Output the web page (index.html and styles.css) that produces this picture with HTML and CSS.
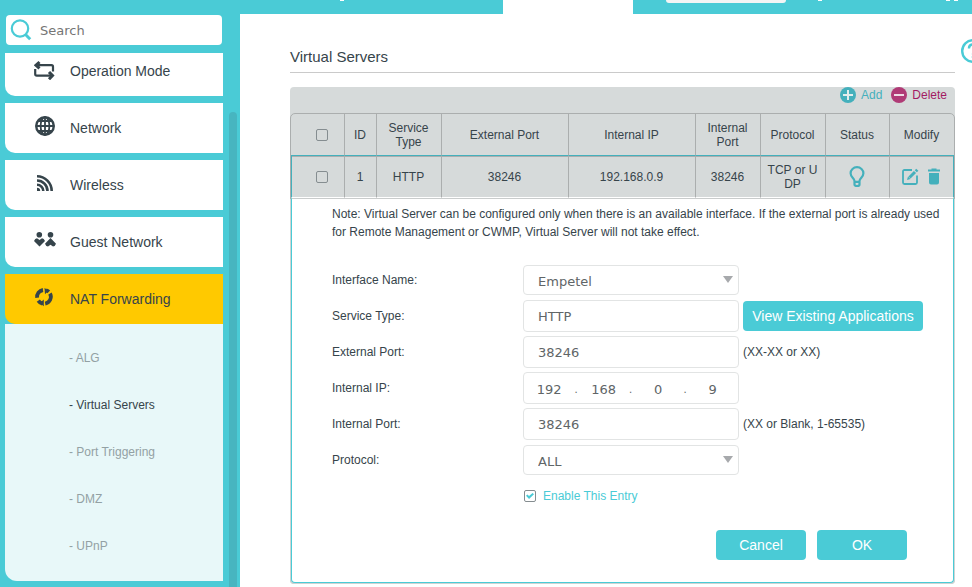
FILE: index.html
```html
<!DOCTYPE html>
<html lang="en">
<head>
<meta charset="utf-8">
<title>Virtual Servers</title>
<link rel="stylesheet" href="styles.css">
</head>
<body>
<div class="app">
  <aside class="sidebar">
    <label class="search">
      <svg width="22" height="22" viewBox="0 0 22 22" fill="none" stroke="#4acbd6" aria-hidden="true"><circle cx="10" cy="9.500" r="8.200" stroke-width="2.200"/><path d="M15.500 15.500l4.700 4.700" stroke-width="3"/></svg>
      <input type="search" placeholder="Search">
    </label>
    <div class="menu-area">
      <nav class="menu">
        <a class="item" href="#"><svg width="22" height="22" viewBox="0 -1 22 22" fill="none" stroke="#36444b" stroke-width="2.200" aria-hidden="true"><path d="M3 6.200h14.500q1.500 0 1.500 1.500v4.800"/><path d="M1.200 10v5q0 1.600 1.600 1.600H17"/><path d="M5.500 3L2 6.200l3.500 3.200M15 13l3.500 3.600L15 20.200" stroke-width="3"/></svg>Operation Mode</a>
        <a class="item" href="#"><svg width="22" height="22" viewBox="0 -1 22 22" fill="none" stroke="#36444b" stroke-width="1.800" aria-hidden="true"><circle cx="11" cy="10" r="8.800" stroke-width="2.400"/><ellipse cx="11" cy="10" rx="4.400" ry="8.800"/><path d="M11 1v18M2 10h18M3.500 5h15M3.500 15h15"/></svg>Network</a>
        <a class="item" href="#"><svg width="22" height="22" viewBox="0 -1 22 22" fill="none" stroke="#36444b" stroke-width="2.600" aria-hidden="true"><path d="M3 3.300a14.700 14.700 0 0 1 14.700 14.700M3 7.500a10.500 10.500 0 0 1 10.500 10.500M3 11.700a6.300 6.300 0 0 1 6.300 6.300"/><path d="M3 14.800a3.200 3.200 0 0 1 3.200 3.200H3z" fill="#36444b" stroke="none"/></svg>Wireless</a>
        <a class="item" href="#"><svg width="22" height="22" viewBox="0 -1 22 22" fill="#36444b" aria-hidden="true"><circle cx="5.300" cy="4.700" r="2.800"/><circle cx="16.500" cy="4.700" r="2.800"/><path d="M0 11q1-2.800 3-2.800L5.500 10 8 8.200q2 0 3 2.800l-5.500 5.500zM16.500 8l5.500 5.700q-1 2.800-3 2.800l-2.500-1.800-2.500 1.800q-2 0-3-2.800z"/></svg>Guest Network</a>
        <a class="item active" href="#"><svg width="22" height="22" viewBox="0 -1 22 22" fill="none" stroke="#36444b" stroke-width="3.800" aria-hidden="true"><path d="M3.100 10.800A7 7 0 0 1 9 3M12 3.200a7 7 0 0 1 2.800 1.700M16 6.500a7 7 0 0 1-4.800 10.200M8.500 16.600a7 7 0 0 1-4.200-3"/><path d="M10.500 1l4 2.500-3.500 3.700zM9.800 12.500v6.700L5.800 16z" fill="#36444b" stroke="none"/></svg>NAT Forwarding</a>
      </nav>
      <ul class="submenu">
        <li><a href="#">- ALG</a></li>
        <li><a class="current" href="#">- Virtual Servers</a></li>
        <li><a href="#">- Port Triggering</a></li>
        <li><a href="#">- DMZ</a></li>
        <li><a href="#">- UPnP</a></li>
      </ul>
    </div>
    <div class="thumb"></div>
  </aside>

  <main class="main">
    <div class="topbar">
      <div class="top-left"><i class="mark"></i></div>
      <div class="top-tab"></div>
      <div class="top-right"><div class="top-select"></div><i class="mark"></i><i class="mark far"></i><i class="mark"></i></div>
    </div>
    <div class="content">
      <div class="title-bar">
        <h1>Virtual Servers</h1>
        <button class="help" type="button" aria-label="Help"><svg width="24" height="24" viewBox="0 0 24 24" fill="none" stroke="#4acbd6" stroke-width="2.400" aria-hidden="true"><circle cx="12" cy="12" r="10.800"/><path d="M8 9.500a4 4 0 1 1 5.500 3.500q-1.500.7-1.500 2.500M12 17v2"/></svg></button>
      </div>

      <div class="panel">
        <div class="toolbar">
          <button class="tool add" type="button"><svg width="16" height="16" viewBox="0 0 16 16" aria-hidden="true"><circle cx="8" cy="8" r="8" fill="currentColor"/><path d="M3 8h10M8 3v10" stroke="#e3eeee" stroke-width="2"/></svg>Add</button>
          <button class="tool delete" type="button"><svg width="16" height="16" viewBox="0 0 16 16" aria-hidden="true"><circle cx="8" cy="8" r="8" fill="#b03b76"/><path d="M3 8h10" stroke="#eedde5" stroke-width="2"/></svg>Delete</button>
        </div>
        <table class="servers">
          <colgroup><col class="c-check"><col class="c-id"><col class="c-small"><col><col><col class="c-small"><col class="c-small"><col class="c-status"><col class="c-small"></colgroup>
          <thead>
            <tr><th><input class="box" type="checkbox" aria-label="Select all"></th><th>ID</th><th>Service Type</th><th>External Port</th><th>Internal IP</th><th>Internal Port</th><th>Protocol</th><th>Status</th><th>Modify</th></tr>
          </thead>
          <tbody>
            <tr class="entry">
              <td><input class="box" type="checkbox" aria-label="Select entry 1"></td><td>1</td><td>HTTP</td><td>38246</td><td>192.168.0.9</td><td>38246</td><td>TCP or U<br>DP</td>
              <td><button class="icon" type="button" aria-label="Toggle status"><svg width="16" height="22" viewBox="0 0 16 22" fill="none" stroke="#44b0bc" stroke-width="2.200" aria-hidden="true"><path d="M5.500 15c0-2.500-3.900-3.800-3.900-7.700a6.400 6.100 0 0 1 12.800 0c0 3.900-3.900 5.200-3.900 7.700v3.500q0 1.500-2.500 1.500t-2.500-1.500zM5.500 15.800h5"/></svg></button></td>
              <td><div class="icons">
                <button class="icon" type="button" aria-label="Edit"><svg width="17" height="17" viewBox="0 0 17 17" fill="none" stroke="#44b0bc" stroke-width="1.800" aria-hidden="true"><path d="M10 2H2.500Q1 2 1 3.500v11Q1 16 2.500 16h11q1.500 0 1.500-1.500V7.500"/><path d="M7.500 9.500L13 4" stroke-width="3"/><path d="M13.800 3.200l1.500-1.500" stroke-width="3"/><path d="M5 12l1-3.500L8.500 11z" fill="#44b0bc" stroke="none"/></svg></button>
                <button class="icon" type="button" aria-label="Delete"><svg width="12" height="17" viewBox="0 0 12 17" fill="#44b0bc" aria-hidden="true"><path d="M0 1.500h3.500V.5h5v1H12v2H0zM1 5h10v9.500q0 2-2 2H3q-2 0-2-2z"/></svg></button>
              </div></td>
            </tr>
            <tr>
              <td class="editor" colspan="9">
                <form>
                  <p class="note">Note: Virtual Server can be configured only when there is an available interface. If the external port is already used for Remote Management or CWMP, Virtual Server will not take effect.</p>
                  <div class="row"><label for="iface">Interface Name:</label><div class="select"><select id="iface"><option>Empetel</option></select></div></div>
                  <div class="row"><label for="service">Service Type:</label><input class="field" id="service" type="text" value="HTTP"><button class="btn wide" type="button">View Existing Applications</button></div>
                  <div class="row"><label for="ext">External Port:</label><input class="field" id="ext" type="text" value="38246"><span>(XX-XX or XX)</span></div>
                  <div class="row"><label for="ip1">Internal IP:</label><div class="field ip"><input id="ip1" type="text" value="192"><span>.</span><input type="text" value="168" aria-label="Second octet"><span>.</span><input type="text" value="0" aria-label="Third octet"><span>.</span><input type="text" value="9" aria-label="Fourth octet"></div></div>
                  <div class="row"><label for="int">Internal Port:</label><input class="field" id="int" type="text" value="38246"><span>(XX or Blank, 1-65535)</span></div>
                  <div class="row"><label for="proto">Protocol:</label><div class="select"><select id="proto"><option>ALL</option></select></div></div>
                  <div class="row"><label class="enable"><input class="box" type="checkbox" checked>Enable This Entry</label></div>
                  <div class="actions"><button class="btn" type="button">Cancel</button><button class="btn" type="button">OK</button></div>
                </form>
              </td>
            </tr>
          </tbody>
        </table>
      </div>
    </div>
  </main>
</div>
</body>
</html>
```
FILE: styles.css
```css
* { box-sizing: border-box; }
body {
  margin: 0;
  overflow: hidden;
  font-family: Arial, "Liberation Sans", sans-serif;
  font-size: 12px;
  color: #36444b;
  background: #fff;
}
button { border: 0; padding: 0; background: none; font: inherit; cursor: pointer; }
a { color: inherit; text-decoration: none; }
svg { display: block; flex: none; }

.app { display: grid; grid-template-columns: 240px minmax(0, 1fr); height: 100vh; }

/* Sidebar */
.sidebar {
  display: grid;
  grid-template-columns: 218px 8px;
  grid-template-rows: 30px 1fr;
  gap: 8px 6px;
  padding: 15px 3px 0 5px;
  background: #4acbd6;
  min-height: 0;
}
.search {
  display: flex;
  align-items: center;
  gap: 8px;
  grid-column: 1 / -1;
  width: 216px;
  margin-left: 1px;
  padding-left: 4px;
  border-radius: 4px;
  background: #fff;
}
.search input {
  flex: 1;
  min-width: 0;
  border: 0;
  padding: 0;
  outline: 0;
  background: none;
  font: 13px "DejaVu Sans", sans-serif;
}
.search input::placeholder { color: #757575; }
.menu-area { overflow: hidden; }
.menu { display: grid; gap: 7px; margin-top: -7px; background: #4acbd6; }
.item {
  display: flex;
  align-items: center;
  gap: 14px;
  height: 50px;
  padding-left: 29px;
  border-bottom-left-radius: 10px;
  background: #fff;
  font-size: 14px;
}
.item svg { margin-bottom: 4px; }
.item.active { background: #ffc900; }
.submenu {
  margin: 0;
  padding: 11px 0 11px 64px;
  list-style: none;
  border-bottom-left-radius: 12px;
  background: #e8f8f9;
  line-height: 47px;
  color: #93a1a4;
}
.submenu .current { color: #36444b; }
.thumb { margin-top: 59px; border-radius: 4px 4px 0 0; background: #47b5c0; }

/* Top strip */
.main { min-width: 0; overflow: hidden; }
.topbar { display: flex; height: 14px; }
.top-left { width: 263px; padding-left: 100px; background: #4acbd6; }
.top-tab { width: 130px; }
.top-right { display: flex; flex: 1; background: #4acbd6; padding-left: 33px; }
.top-select { width: 120px; height: 3px; margin-right: 32px; border-radius: 0 0 4px 4px; background: #f3f5f5; }
.mark { display: block; width: 4px; height: 1px; background: #fff; }
.mark.far { margin: 0 4px 0 124px; }

/* Content */
.content { padding: 25px 0 0 50px; }
.title-bar { display: flex; align-items: flex-start; gap: 6px; margin-right: -13px; }
h1 {
  flex: 1;
  margin: 0;
  height: 34px;
  padding-top: 9px;
  border-bottom: 1px solid #cacaca;
  font-size: 15px;
  font-weight: normal;
  line-height: 18px;
}
.panel { margin: 14px 17px 0 0; border-radius: 4px; background: #d6dada; }
.toolbar { display: flex; justify-content: flex-end; gap: 9px; height: 26px; padding-right: 8px; }
.tool { display: flex; align-items: center; gap: 5px; height: 16px; }
.add { color: #44b0bc; }
.delete { color: #a31a63; }

.servers {
  width: 100%;
  table-layout: fixed;
  border: 1px solid #abaeae;
  border-radius: 5px;
  border-collapse: separate;
  border-spacing: 0;
  font-size: 12px;
  line-height: 14px;
  text-align: center;
}
.c-check { width: 53px; }
.c-id { width: 32px; }
.c-small { width: 65px; }
.c-status { width: 64px; }
.servers th, .entry td { padding: 0 7px 0 6px; border-left: 1px solid #abaeae; font-weight: normal; }
.servers th:first-child { border-left-color: transparent; }
.servers th:first-child, .entry td:first-child { padding-left: 15px; }
.servers th { height: 41px; }
.entry td {
  height: 43px;
  border-top: 1px solid #44b0bc;
  border-bottom: 1px solid #fff;
  box-shadow: inset 0 1px #abaeae;
}
.entry td:first-child { border-left-color: #44b0bc; }
.entry td:last-child { border-right: 1px solid #44b0bc; }
.icon { display: inline-block; vertical-align: middle; }
.icons { display: flex; justify-content: center; align-items: center; gap: 9px; }

.box {
  display: inline-grid;
  place-content: center;
  width: 12px;
  height: 12px;
  margin: 0;
  appearance: none;
  border: 1px solid #858d90;
  border-radius: 2px;
  vertical-align: middle;
}
.box:checked::before {
  content: "";
  width: 8px;
  height: 6px;
  background: #4acbd6;
  clip-path: polygon(0 45%, 18% 25%, 38% 50%, 82% 0, 100% 22%, 38% 100%);
}

/* Entry editor */
.servers .editor {
  padding: 6px 8px 22px 40px;
  border: 1px solid #4acbd6;
  border-top-color: #c9cccc;
  border-radius: 0 0 4px 4px;
  background: #fff;
  box-shadow: -1px 1px #cfd3d3, 1px 1px #cfd3d3;
  text-align: left;
}
.note { margin: 0 0 21px; line-height: 18px; }
.row { display: grid; grid-template-columns: 191px 216px 1fr; align-items: center; height: 36px; }
.row > :nth-child(3) { justify-self: start; margin-left: 4px; }
.field, .select select {
  width: 100%;
  height: 32px;
  padding: 0 14px;
  border: 1px solid #e2e4e4;
  border-radius: 4px;
  background: #fff;
  color: #606567;
  font: 13px "DejaVu Sans", sans-serif;
}
.select { position: relative; }
.select select { display: block; height: 30px; padding-top: 2px; appearance: none; }
.select::after {
  content: "";
  position: absolute;
  top: 11px;
  right: 6px;
  width: 10px;
  height: 7px;
  background: #a7a9ac;
  clip-path: polygon(0 0, 100% 0, 50% 100%);
  pointer-events: none;
}
.field.ip { display: flex; align-items: center; padding: 2px 0 0; }
.ip input { flex: 1; min-width: 0; border: 0; padding: 0; background: none; color: inherit; font: inherit; text-align: center; }
.ip span { width: 4px; font-size: 10px; }
.enable { grid-column: 2 / -1; display: flex; align-items: center; gap: 7px; padding-left: 1px; color: #4acbd6; }
.actions { display: flex; justify-content: flex-end; gap: 11px; margin-top: 16px; padding-right: 38px; }
.btn { width: 90px; height: 30px; border-radius: 4px; background: #4acbd6; color: #fff; font-size: 14px; }
.btn.wide { width: 180px; }
```
